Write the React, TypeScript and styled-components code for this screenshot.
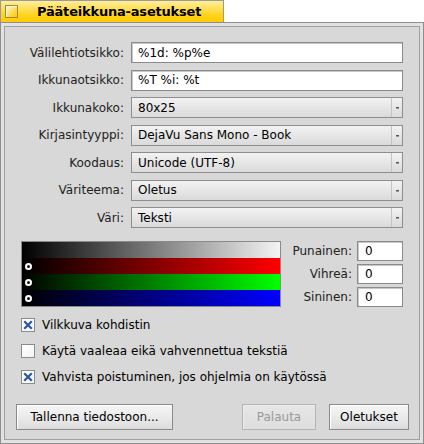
import React from "react";
import styled, { createGlobalStyle } from "styled-components";

const Global = createGlobalStyle`
  html, body { margin: 0; padding: 0; background: #ffffff; }
  body { font-family: "DejaVu Sans", "Noto Sans", sans-serif; font-size: 12px; color: #000; }
  * { box-sizing: border-box; }
`;

const Screen = styled.div`
  width: 424px;
  height: 444px;
  display: flex;
  flex-direction: column;
`;

const Tab = styled.div`
  width: 224px;
  height: 22px;
  border: 1px solid #9a9a9a;
  border-bottom: none;
  background: linear-gradient(#ffee9c, #ffd21a 70%, #ffcb00);
  display: flex;
  align-items: center;
  padding-left: 4px;
  gap: 19px;
`;

const CloseBox = styled.div`
  width: 13px;
  height: 13px;
  border: 1px solid #a08a38;
  background: linear-gradient(135deg, #fff9dc, #ffd84a 60%, #ffcc00);
  box-shadow: inset 1px 1px 0 #fffbe6;
`;

const Title = styled.div`
  font-weight: bold;
  font-size: 13px;
  letter-spacing: -0.2px;
`;

const Frame = styled.div`
  flex: 1;
  border: 1px solid #8e8e8e;
  background: #e2e2e2;
  padding: 3px;
  display: flex;
`;

const Panel = styled.div`
  flex: 1;
  border: 1px solid #a0a0a0;
  background: #d8d8d8;
  padding: 15px 16px 0 16px;
  display: flex;
  flex-direction: column;
`;

const Form = styled.div`
  display: grid;
  grid-template-columns: 103px 272px;
  column-gap: 7px;
  row-gap: 6.5px;
  grid-auto-rows: 21px;
  align-items: center;
`;

const Label = styled.div`
  text-align: right;
  white-space: nowrap;
  color: #222;
`;

const TextInput = styled.div`
  height: 21px;
  border: 1px solid #8a8a8a;
  background: #ffffff;
  display: flex;
  align-items: center;
  padding-left: 6px;
  box-shadow: inset 1px 1px 0 #c8c8c8;
`;

const Select = styled.div`
  height: 21px;
  border: 1px solid #8e8e8e;
  background: linear-gradient(#f2f2f2, #e4e4e4 60%, #dadada);
  display: flex;
  align-items: center;
`;

const SelectText = styled.div`
  flex: 1;
  padding-left: 6px;
  white-space: nowrap;
`;

const Arrow = styled.div`
  width: 11px;
  height: 100%;
  border-left: 1px solid #c4c4c4;
  display: flex;
  align-items: center;
  justify-content: center;
  &::after {
    content: "";
    width: 3px;
    height: 1px;
    background: #555;
    box-shadow: 0 1px 0 #999;
  }
`;

const ColorSection = styled.div`
  display: flex;
  margin-top: 13px;
  align-items: flex-start;
`;

const ColorBox = styled.div`
  width: 260px;
  height: 66px;
  border: 1px solid #8a8a8a;
  display: flex;
  flex-direction: column;
`;

const Ramp = styled.div<{ $to: string }>`
  height: 16px;
  position: relative;
  background: linear-gradient(to right, #000000, ${(p) => p.$to});
`;

const Marker = styled.div`
  position: absolute;
  left: 3px;
  top: 5px;
  width: 7px;
  height: 7px;
  border-radius: 50%;
  border: 2px solid #ffffff;
  background: #111;
`;

const RGBGrid = styled.div`
  margin-left: auto;
  display: grid;
  grid-template-columns: auto 46px;
  column-gap: 5px;
  row-gap: 3px;
  grid-auto-rows: 20px;
  align-items: center;
`;

const SmallInput = styled(TextInput)`
  height: 20px;
  padding-left: 7px;
`;

const Checks = styled.div`
  margin-top: 11px;
  display: flex;
  flex-direction: column;
  gap: 13px;
`;

const CheckRow = styled.div`
  display: flex;
  align-items: center;
  gap: 7px;
  height: 13px;
  white-space: nowrap;
`;

const Box = styled.div`
  width: 14px;
  height: 14px;
  border: 1px solid #8c8c8c;
  background: linear-gradient(135deg, #ffffff, #f4f4f4);
  display: flex;
  align-items: center;
  justify-content: center;
`;

const Buttons = styled.div`
  margin-top: 21px;
  margin-left: -5px;
  margin-right: -6px;
  display: flex;
  align-items: center;
`;

const Button = styled.div<{ $disabled?: boolean; $width: number }>`
  width: ${(p) => p.$width}px;
  height: 26px;
  border: 1px solid ${(p) => (p.$disabled ? "#b4b4b4" : "#8a8a8a")};
  background: ${(p) =>
    p.$disabled
      ? "linear-gradient(#e6e6e6, #dedede)"
      : "linear-gradient(#f6f6f6, #e8e8e8 60%, #dcdcdc)"};
  box-shadow: inset 1px 1px 0 ${(p) => (p.$disabled ? "#ececec" : "#ffffff")};
  color: ${(p) => (p.$disabled ? "#9a9a9a" : "#000")};
  display: flex;
  align-items: center;
  justify-content: center;
  white-space: nowrap;
`;

const Spacer = styled.div<{ $fixed?: number }>`
  flex: ${(p) => (p.$fixed ? `0 0 ${p.$fixed}px` : "1")};
`;

const Cross = () => (
  <svg width="10" height="10" viewBox="0 0 10 10">
    <path d="M2 2 L8 8 M8 2 L2 8" stroke="#2a56a8" strokeWidth="2.2" strokeLinecap="square" />
  </svg>
);

const rows: { label: string; value: string; select?: boolean }[] = [
  { label: "Välilehtiotsikko:", value: "%1d: %p%e" },
  { label: "Ikkunaotsikko:", value: "%T %i: %t" },
  { label: "Ikkunakoko:", value: "80x25", select: true },
  { label: "Kirjasintyyppi:", value: "DejaVu Sans Mono - Book", select: true },
  { label: "Koodaus:", value: "Unicode (UTF-8)", select: true },
  { label: "Väriteema:", value: "Oletus", select: true },
  { label: "Väri:", value: "Teksti", select: true },
];

const checks = [
  { label: "Vilkkuva kohdistin", on: true },
  { label: "Käytä vaaleaa eikä vahvennettua tekstiä", on: false },
  { label: "Vahvista poistuminen, jos ohjelmia on käytössä", on: true },
];

export default function App() {
  return (
    <Screen>
      <Global />
      <Tab>
        <CloseBox />
        <Title>Pääteikkuna-asetukset</Title>
      </Tab>
      <Frame>
        <Panel>
          <Form>
            {rows.map((r) => (
              <React.Fragment key={r.label}>
                <Label>{r.label}</Label>
                {r.select ? (
                  <Select>
                    <SelectText>{r.value}</SelectText>
                    <Arrow />
                  </Select>
                ) : (
                  <TextInput>{r.value}</TextInput>
                )}
              </React.Fragment>
            ))}
          </Form>
          <ColorSection>
            <ColorBox>
              <Ramp $to="#f4f4f4" />
              <Ramp $to="#ff0000">
                <Marker />
              </Ramp>
              <Ramp $to="#00ff00">
                <Marker />
              </Ramp>
              <Ramp $to="#0000ff">
                <Marker />
              </Ramp>
            </ColorBox>
            <RGBGrid>
              <Label>Punainen:</Label>
              <SmallInput>0</SmallInput>
              <Label>Vihreä:</Label>
              <SmallInput>0</SmallInput>
              <Label>Sininen:</Label>
              <SmallInput>0</SmallInput>
            </RGBGrid>
          </ColorSection>
          <Checks>
            {checks.map((c) => (
              <CheckRow key={c.label}>
                <Box>{c.on && <Cross />}</Box>
                {c.label}
              </CheckRow>
            ))}
          </Checks>
          <Buttons>
            <Button $width={157}>Tallenna tiedostoon...</Button>
            <Spacer />
            <Button $width={74} $disabled>
              Palauta
            </Button>
            <Spacer $fixed={13} />
            <Button $width={80}>Oletukset</Button>
          </Buttons>
        </Panel>
      </Frame>
    </Screen>
  );
}
